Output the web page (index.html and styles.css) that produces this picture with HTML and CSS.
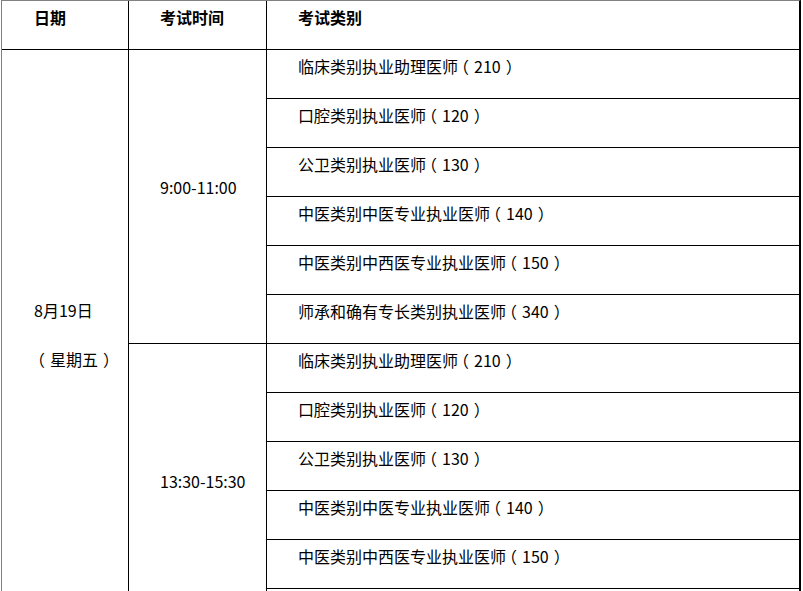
FILE: index.html
```html
<!DOCTYPE html>
<html lang="zh-CN">
<head>
<meta charset="utf-8">
<title>考试时间安排</title>
<link rel="stylesheet" href="styles.css">
</head>
<body>
<div class="sheet">
  <div class="cell c1 head">日期</div>
  <div class="cell c2 head">考试时间</div>
  <div class="cell c3 head">考试类别</div>

  <div class="cell c1 span12 mid">
    <div class="line">8月19日</div>
    <div class="line"><span class="lp">（</span>星期五<span class="rp">）</span></div>
  </div>

  <div class="cell c2 span6 mid"><div class="line">9:00-11:00</div></div>
  <div class="cell c3">临床类别执业助理医师<span class="lp">（</span>210<span class="rp">）</span></div>
  <div class="cell c3">口腔类别执业医师<span class="lp">（</span>120<span class="rp">）</span></div>
  <div class="cell c3">公卫类别执业医师<span class="lp">（</span>130<span class="rp">）</span></div>
  <div class="cell c3">中医类别中医专业执业医师<span class="lp">（</span>140<span class="rp">）</span></div>
  <div class="cell c3">中医类别中西医专业执业医师<span class="lp">（</span>150<span class="rp">）</span></div>
  <div class="cell c3">师承和确有专长类别执业医师<span class="lp">（</span>340<span class="rp">）</span></div>

  <div class="cell c2 span6 mid"><div class="line">13:30-15:30</div></div>
  <div class="cell c3">临床类别执业助理医师<span class="lp">（</span>210<span class="rp">）</span></div>
  <div class="cell c3">口腔类别执业医师<span class="lp">（</span>120<span class="rp">）</span></div>
  <div class="cell c3">公卫类别执业医师<span class="lp">（</span>130<span class="rp">）</span></div>
  <div class="cell c3">中医类别中医专业执业医师<span class="lp">（</span>140<span class="rp">）</span></div>
  <div class="cell c3">中医类别中西医专业执业医师<span class="lp">（</span>150<span class="rp">）</span></div>
  <div class="cell c3"></div>
</div>
</body>
</html>
```

FILE: styles.css
```css
html, body {
  margin: 0;
  padding: 0;
  background: #ffffff;
}

body {
  font-family: "Noto Sans CJK SC", "Noto Sans", sans-serif;
  font-size: 16px;
  color: #000000;
}

.sheet {
  margin-left: 1px;
  width: 797px;
  display: grid;
  grid-template-columns: 127px 138px 532px;
  grid-auto-rows: 49px;
  border-top: 1px solid #808080;
  border-left: 1px solid #808080;
  border-right: 2px solid #000000;
}

.cell {
  box-sizing: border-box;
  border-bottom: 1px solid #000000;
  padding: 4px 0 20px 31px;
  line-height: 24px;
  white-space: nowrap;
}

.c1 {
  grid-column: 1;
  border-right: 1px solid #000000;
  padding-left: 32px;
}

.c2 {
  grid-column: 2;
  border-right: 1px solid #000000;
}

.c3 {
  grid-column: 3;
}

.head {
  font-weight: bold;
}

.span12 {
  grid-row: span 12;
}

.span6 {
  grid-row: span 6;
}

.mid {
  display: flex;
  flex-direction: column;
  justify-content: center;
  gap: 25px;
  padding-bottom: 23px;
}

/* half-width brackets padded back to a centred full-width slot */
.lp {
  font-feature-settings: "halt" 1;
  padding-left: 3px;
  padding-right: 5px;
}

.rp {
  font-feature-settings: "halt" 1;
  padding-left: 5px;
  padding-right: 3px;
}
```
